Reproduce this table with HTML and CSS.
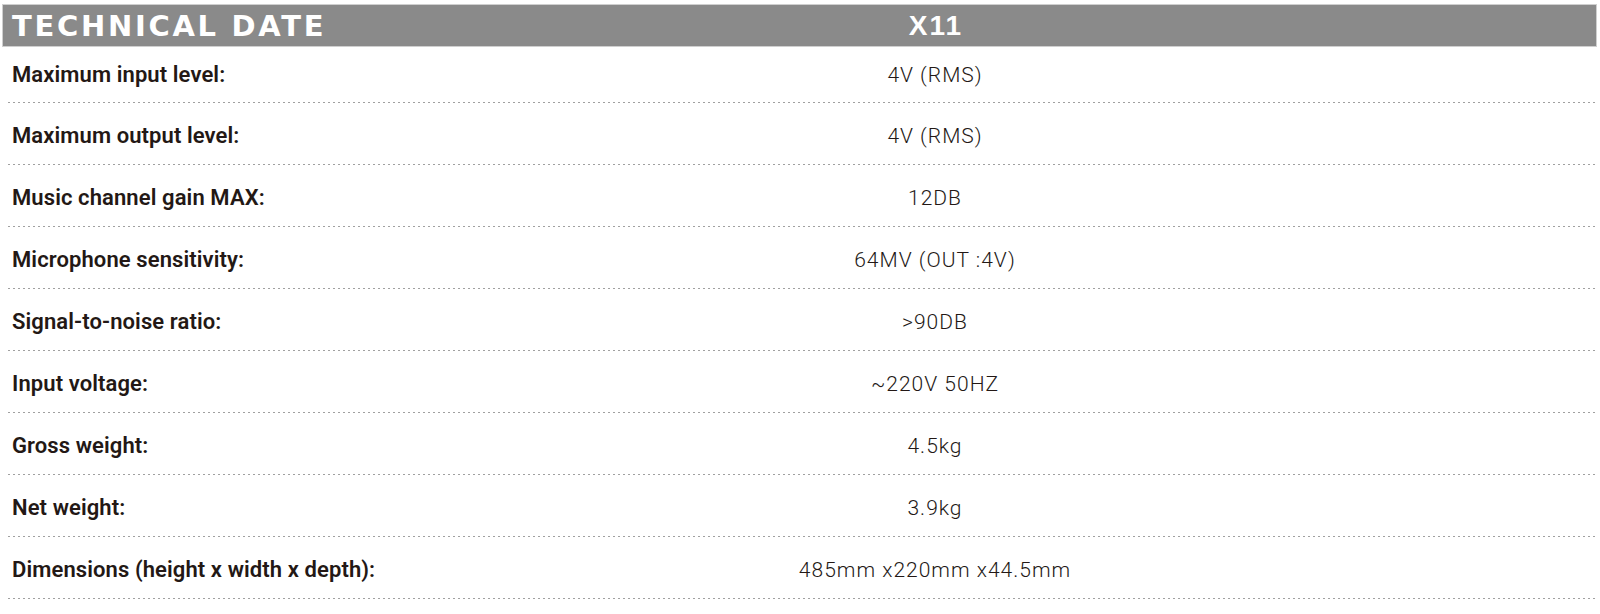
FILE: index.html
```html
<!DOCTYPE html>
<html lang="en">
<head>
<meta charset="utf-8">
<title>Technical Date - X11</title>
<link rel="stylesheet" href="styles.css">
</head>
<body>
<div class="sheet">
  <div class="head">
    <div class="head-title">TECHNICAL DATE</div>
    <div class="head-model">X11</div>
  </div>
  <div class="rows">
    <div class="row"><div class="label">Maximum input level:</div><div class="value">4V (RMS)</div></div>
    <div class="row"><div class="label">Maximum output level:</div><div class="value">4V (RMS)</div></div>
    <div class="row"><div class="label">Music channel gain MAX:</div><div class="value">12DB</div></div>
    <div class="row"><div class="label">Microphone sensitivity:</div><div class="value">64MV (OUT :4V)</div></div>
    <div class="row"><div class="label">Signal-to-noise ratio:</div><div class="value">&gt;90DB</div></div>
    <div class="row"><div class="label">Input voltage:</div><div class="value">~220V 50HZ</div></div>
    <div class="row"><div class="label">Gross weight:</div><div class="value">4.5kg</div></div>
    <div class="row"><div class="label">Net weight:</div><div class="value">3.9kg</div></div>
    <div class="row"><div class="label">Dimensions (height x width x depth):</div><div class="value">485mm x220mm x44.5mm</div></div>
  </div>
</div>
</body>
</html>
```
FILE: styles.css
```css
html, body {
  margin: 0;
  padding: 0;
  background: #ffffff;
}

.sheet {
  padding: 4px 3px 0 2px;
}

.head {
  display: grid;
  grid-template-columns: 633px 600px 1fr;
  align-items: center;
  height: 43px;
  box-sizing: border-box;
  border: 1px solid #cfcfcf;
  background: #8a8a8a;
  color: #ffffff;
}

.head-title {
  padding-left: 9px;
  font-family: "DejaVu Sans", sans-serif;
  font-weight: 700;
  font-size: 29px;
  letter-spacing: 2.7px;
  line-height: 34px;
}

.head-model {
  text-align: center;
  font-family: "Liberation Sans", Arial, sans-serif;
  font-weight: 700;
  font-size: 28px;
  letter-spacing: 2px;
  line-height: 34px;
}

.rows {
  margin-left: 6px;
}

.row {
  display: grid;
  grid-template-columns: 627px 600px 1fr;
  align-items: baseline;
  height: 62px;
  box-sizing: border-box;
  padding-top: 20px;
  color: #231815;
  background-image: linear-gradient(to right, #a0a0a0 2px, transparent 2px);
  background-size: 5px 1px;
  background-repeat: repeat-x;
  background-position: 0 100%;
}

.row:first-child {
  height: 56px;
  padding-top: 15px;
}

.label {
  padding-left: 4px;
  font-family: Roboto, "Liberation Sans", sans-serif;
  font-weight: 600;
  font-size: 22px;
  letter-spacing: 0.1px;
  line-height: 26px;
}

.value {
  text-align: center;
  font-family: Roboto, "Liberation Sans", sans-serif;
  font-weight: 300;
  font-size: 21px;
  letter-spacing: 1px;
  line-height: 26px;
}
```
